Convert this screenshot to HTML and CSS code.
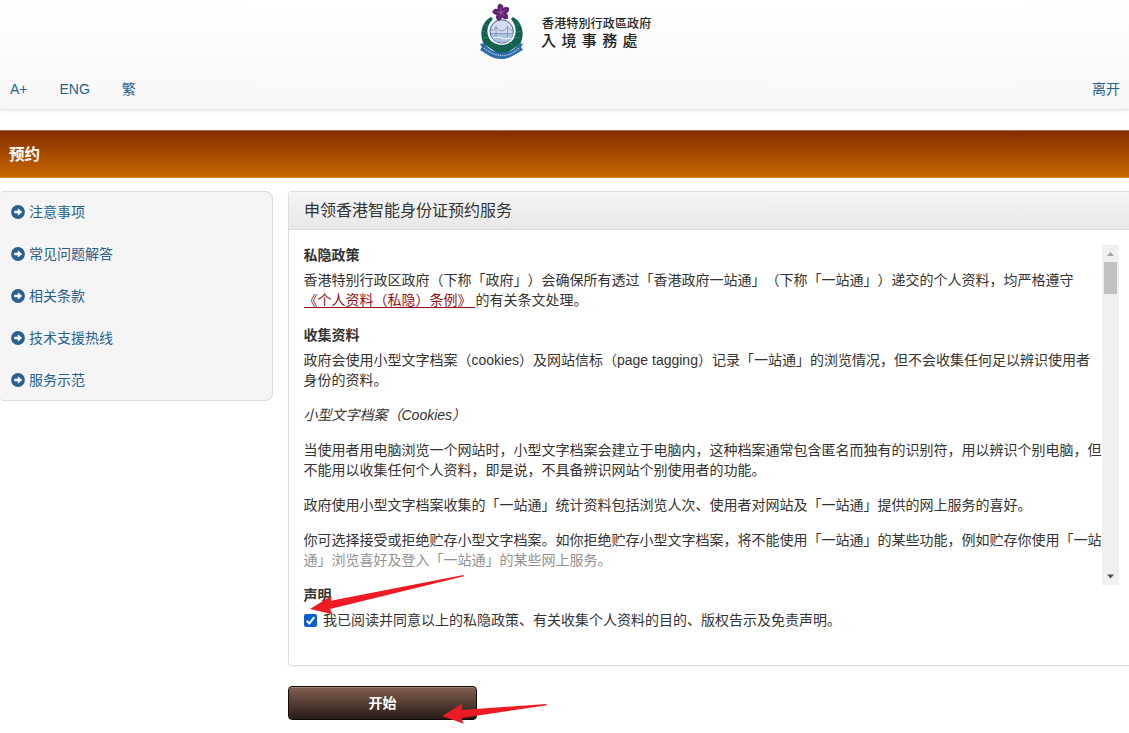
FILE: index.html
```html
<!DOCTYPE html>
<html lang="zh-CN">
<head>
<meta charset="utf-8">
<title>申领香港智能身份证预约服务</title>
<link rel="stylesheet" href="styles.css">
</head>
<body>
<svg class="defs" width="0" height="0" aria-hidden="true">
  <symbol id="go" viewBox="0 0 14 14">
    <circle cx="7" cy="7" r="6.9" fill="#28608f"/>
    <path d="M3.200 5.700h3.600V3.200L11.200 7l-4.400 3.800V8.300H3.200z" fill="#f5f5f5"/>
  </symbol>
</svg>
<header class="top">
  <div class="brand">
    <svg class="emblem" width="48" height="60" viewBox="0 0 48 60">
      <path d="M13 17C3 22 1 36 6 44l13 9h10l13-9c5-8 3-22-7-27l-2 2c5 6 6 13 3 19-4 9-21 9-25 0-3-6-2-13 4-19z" fill="#11614f"/>
      <path d="M6 24l4 2M4 31l6 2M5 38l6-1M41 24l-4 2M43 31l-6 2M42 38l-6-1M12 46l4-4M35 46l-4-4" stroke="#2f8873" stroke-width=".8"/>
      <circle cx="23.700" cy="31.500" r="13" fill="#e6ecee"/>
      <circle cx="23.700" cy="31.500" r="11.600" fill="#d3dcf0" stroke="#55639b" stroke-width="1"/>
      <path d="M13 34h22c-1 5-5 8.500-11 8.500S14 39 13 34z" fill="#a9c3e0"/>
      <path d="M18 26v11M29.500 26v11M12.500 31q4-1 5.500-4 5.500 8 11.500 0 2 3 5.500 4M13 33.500h22" fill="none" stroke="#8392b5" stroke-width=".9"/>
      <path d="M15 38l6-1 5 2 7-1" fill="none" stroke="#f1f4f8" stroke-width="1.200"/>
      <path d="M2 44l4-1c6 8 11 9.500 17.500 9.500S36 51 41 43l4 1-2 3 2 3c-7 3-12 9-21.500 9S9 54 2 50l2-3z" fill="#2b6aa9"/>
      <path d="M6 48q8 7 17.500 7.500T41 48" fill="none" stroke="#b5cfe9" stroke-width="1.400" stroke-dasharray="1.200 1"/>
      <g fill="#5f2170">
        <path id="petal" d="M23.300 12.500C18.500 10.500 18.500 6 21.500 3.500c1 1 2 .8 3 1.500 1.800 2.200 1 5-1.200 7.500z"/>
        <use href="#petal" transform="rotate(72 23.300 12.500)"/>
        <use href="#petal" transform="rotate(144 23.300 12.500)"/>
        <use href="#petal" transform="rotate(216 23.300 12.500)"/>
        <use href="#petal" transform="rotate(288 23.300 12.500)"/>
      </g>
      <path d="M23.300 12.500l-.8-4M23.300 12.500l3.600-2M23.300 12.500l3 3M23.300 12.500l-1.800 3.800M23.300 12.500l-4-.5" stroke="#b384ba" stroke-width=".6"/>
    </svg>
    <div class="brand-name" lang="zh-HK">
      <div class="gov">香港特別行政區政府</div>
      <div class="dept">入境事務處</div>
    </div>
  </div>
  <nav class="tools">
    <a>A+</a><a>ENG</a><a>繁</a><a class="exit">离开</a>
  </nav>
</header>
<div class="banner">预约</div>
<div class="columns">
  <nav class="side">
    <a><svg width="14" height="14"><use href="#go"/></svg>注意事项</a>
    <a><svg width="14" height="14"><use href="#go"/></svg>常见问题解答</a>
    <a><svg width="14" height="14"><use href="#go"/></svg>相关条款</a>
    <a><svg width="14" height="14"><use href="#go"/></svg>技术支援热线</a>
    <a><svg width="14" height="14"><use href="#go"/></svg>服务示范</a>
  </nav>
  <main class="main">
    <section class="panel">
      <h1>申领香港智能身份证预约服务</h1>
      <div class="policy">
        <div class="policy-text">
          <h2>私隐政策</h2>
          <p>香港特别行政区政府（下称「政府」）会确保所有透过「香港政府一站通」（下称「一站通」）递交的个人资料，均严格遵守<br><a class="law">《个人资料（私隐）条例》&nbsp;</a>的有关条文处理。</p>
          <h2>收集资料</h2>
          <p>政府会使用小型文字档案（cookies）及网站信标（page tagging）记录「一站通」的浏览情况，但不会收集任何足以辨识使用者<br>身份的资料。</p>
          <p><em>小型文字档案（Cookies）</em></p>
          <p>当使用者用电脑浏览一个网站时，小型文字档案会建立于电脑内，这种档案通常包含匿名而独有的识别符，用以辨识个别电脑，但<br>不能用以收集任何个人资料，即是说，不具备辨识网站个别使用者的功能。</p>
          <p>政府使用小型文字档案收集的「一站通」统计资料包括浏览人次、使用者对网站及「一站通」提供的网上服务的喜好。</p>
          <p>你可选择接受或拒绝贮存小型文字档案。如你拒绝贮存小型文字档案，将不能使用「一站通」的某些功能，例如贮存你使用「一站<br><span class="faded">通」浏览喜好及登入「一站通」的某些网上服务。</span></p>
        </div>
        <div class="scroll">
          <svg width="17" height="17"><path d="M5 11l3.500-4L12 11z" fill="#a3a3a3"/></svg>
          <div class="thumb"></div>
          <svg class="down" width="17" height="17"><path d="M5 6.500h7l-3.500 4z" fill="#505050"/></svg>
        </div>
      </div>
      <h2>声明</h2>
      <label class="agree">
        <svg width="13" height="13"><rect width="13" height="13" rx="2" fill="#0b5fcc"/><path d="M2.700 6.800l2.600 2.700 5-6.300" fill="none" stroke="#fff" stroke-width="2"/></svg>
        <span>我已阅读并同意以上的私隐政策、有关收集个人资料的目的、版权告示及免责声明。</span>
      </label>
    </section>
    <button class="start">开始</button>
  </main>
</div>
<svg class="marks" width="1129" height="733" viewBox="0 0 1129 733" fill="#ed1c24">
  <path d="M310 609l21.500-13.300-.7 5L463.300 575l.7 1.300L330 609l2.700 5.300z"/>
  <path d="M442.300 716L462 703.700l-.3 6.300L546 704l1 1.300L461.300 718l2.400 5.700z"/>
</svg>
</body>
</html>
```
FILE: styles.css
```css
* { box-sizing: border-box; }
body {
  position: relative;
  width: 1129px;
  height: 733px;
  margin: 0;
  overflow: hidden;
  background: #fff;
  color: #333;
  font: 14px/20px "Liberation Sans", "Noto Sans CJK SC", sans-serif;
  text-spacing-trim: space-all;
}
.defs { position: absolute; }
svg { flex: none; }

.top {
  height: 110px;
  background: linear-gradient(#fff, #f7f7f7);
  border-bottom: 1px solid #e5e5e5;
  box-shadow: 0 1px 4px rgba(0, 0, 0, .08);
}
.brand {
  display: flex;
  height: 79px;
  padding-left: 478px;
}
.brand-name {
  padding: 14px 0 0 16px;
  color: #222;
  font-family: "Noto Sans CJK TC", sans-serif;
  font-weight: 500;
  white-space: nowrap;
}
.gov { font-size: 12px; line-height: 17px; letter-spacing: .15px; }
.dept { font-size: 15px; line-height: 18px; letter-spacing: 5.400px; margin-left: -1px; }
.tools {
  display: flex;
  gap: 32px;
  padding: 0 9px 0 10px;
  color: #28608f;
}
.exit { margin-left: auto; }

.banner {
  height: 48px;
  margin-top: 20px;
  padding: 0 9px;
  background: linear-gradient(#852e00, #c86800);
  border-top: 1px solid #a56d51;
  border-bottom: 1px solid #d98510;
  color: #fff;
  font-size: 15.500px;
  font-weight: bold;
  line-height: 47px;
}

.columns {
  display: flex;
  align-items: flex-start;
  gap: 15px;
  padding-top: 13px;
}
.side {
  width: 273px;
  height: 210px;
  background: #f5f5f5;
  border: 1px solid #ddd;
  border-left: 0;
  border-radius: 4px 8px 8px 4px;
  color: #28608f;
}
.side a {
  display: flex;
  align-items: center;
  gap: 4px;
  height: 42px;
  padding: 0 0 2px 11px;
}
.main { flex: 1; min-width: 0; }
.panel {
  height: 475px;
  border: 1px solid #ddd;
  border-right: 0;
  border-radius: 4px 0 0 4px;
  box-shadow: 0 1px 2px rgba(0, 0, 0, .06);
}
h1 {
  height: 38px;
  margin: 0 0 15px;
  padding-left: 15px;
  background: linear-gradient(#f5f5f5, #e8e8e8);
  border-bottom: 1px solid #ddd;
  font-size: 16px;
  font-weight: normal;
  line-height: 38px;
}
h2 {
  margin: 0 0 5px;
  font-size: 14px;
  line-height: 20px;
}
p { margin: 0 0 15px; white-space: nowrap; }
.policy {
  display: flex;
  height: 340px;
  padding: 0 10px 0 14.500px;
}
.policy-text { width: 798.500px; overflow: hidden; }
.law { color: #950f19; text-decoration: underline; text-underline-offset: 2px; }
.faded { color: #919191; }
.scroll {
  display: flex;
  flex: none;
  flex-direction: column;
  width: 17px;
  background: #f0f0f0;
}
.thumb { height: 32px; margin: 0 2px; background: #c1c1c1; }
.down { margin-top: auto; }
.panel > h2 { padding-left: 14.500px; }
.agree {
  display: flex;
  align-items: center;
  gap: 6px;
  padding-left: 15px;
}
.start {
  display: block;
  width: 189px;
  height: 34px;
  margin-top: 20px;
  padding: 0;
  background: linear-gradient(#835f50, #261b16);
  border: 1px solid #160a07;
  border-radius: 4px;
  box-shadow: inset 0 1px #a58678;
  color: #fff;
  font: bold 14px/32px "Liberation Sans", "Noto Sans CJK SC", sans-serif;
}
.marks { position: absolute; top: 0; left: 0; pointer-events: none; }
```
